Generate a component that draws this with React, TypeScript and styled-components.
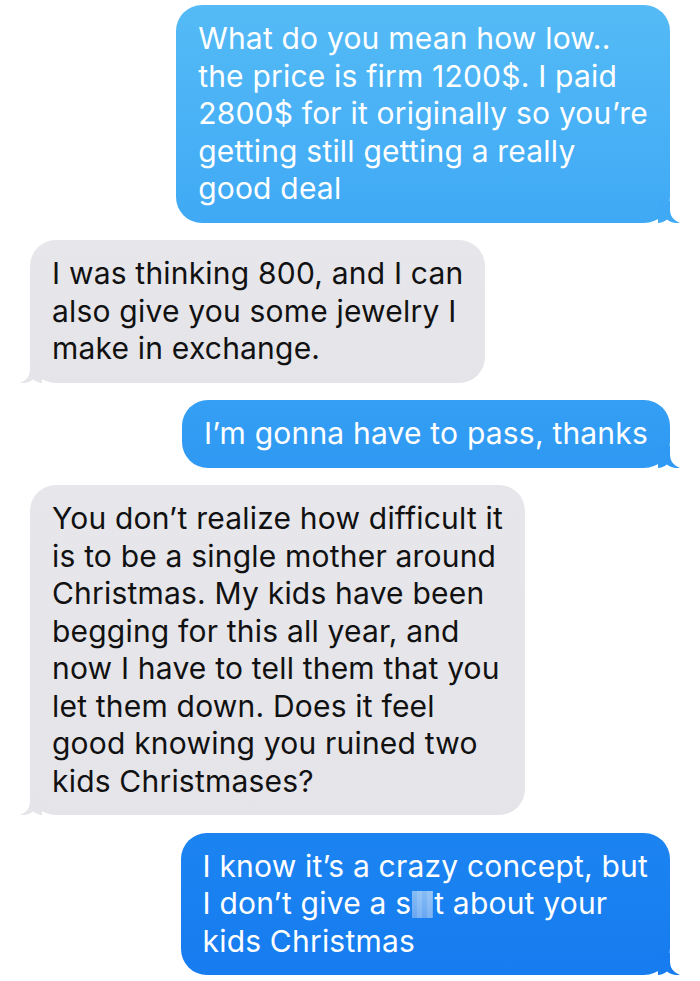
import React, { FC } from 'react';
import styled, { createGlobalStyle } from 'styled-components';

const GlobalStyle = createGlobalStyle`
    html, body {
        margin: 0;
        padding: 0;
        background: #ffffff;
    }
`;

const Thread = styled.div`
    display: flex;
    flex-direction: column;
    gap: 17.5px;
    padding: 5px 30px 6px 30px;
    font-family: Inter, 'Liberation Sans', sans-serif;
`;

const Row = styled.div<{ sent: boolean }>`
    display: flex;
    justify-content: ${({ sent }) => (sent ? 'flex-end' : 'flex-start')};
`;

const Bubble = styled.div<{ top: string; bottom: string; ink: string }>`
    position: relative;
    width: fit-content;
    padding: 15px 22px 15px 22px;
    border-radius: 26px;
    background: linear-gradient(${({ top }) => top}, ${({ bottom }) => bottom});
    color: ${({ ink }) => ink};
    font-size: 30px;
    line-height: 37.5px;
    letter-spacing: 0.2px;
    white-space: pre-line;
`;

const Tail = styled.svg<{ sent: boolean }>`
    position: absolute;
    bottom: 0;
    width: 22px;
    height: 22px;
    ${({ sent }) => (sent ? 'right: -10px;' : 'left: -10px; transform: scaleX(-1);')}
`;

const Censor = styled.span`
    display: inline-block;
    width: 21px;
    height: 27px;
    vertical-align: -4px;
    margin: 0 1px;
    background:
        linear-gradient(90deg, rgba(255, 255, 255, 0.08) 50%, rgba(255, 255, 255, 0.2) 50%),
        linear-gradient(#7db7f4, #5b9ff1);
    background-size: 10px 100%, 100% 100%;
`;

type Message = {
    sent: boolean;
    top: string;
    bottom: string;
    body: React.ReactNode;
};

const messages: Message[] = [
    {
        sent: true,
        top: '#55bbf6',
        bottom: '#3fa9f5',
        body: 'What do you mean how low..\nthe price is firm 1200$. I paid\n2800$ for it originally so you\u2019re\ngetting still getting a really\ngood deal',
    },
    {
        sent: false,
        top: '#e6e6eb',
        bottom: '#e4e4e9',
        body: 'I was thinking 800, and I can\nalso give you some jewelry I\nmake in exchange.',
    },
    {
        sent: true,
        top: '#349ff4',
        bottom: '#2f99f3',
        body: 'I\u2019m gonna have to pass, thanks',
    },
    {
        sent: false,
        top: '#e6e6eb',
        bottom: '#e4e4e9',
        body: 'You don\u2019t realize how difficult it\nis to be a single mother around\nChristmas. My kids have been\nbegging for this all year, and\nnow I have to tell them that you\nlet them down. Does it feel\ngood knowing you ruined two\nkids Christmases?',
    },
    {
        sent: true,
        top: '#1c84f1',
        bottom: '#167cf0',
        body: (
            <>
                {'I know it\u2019s a crazy concept, but\nI don\u2019t give a s'}
                <Censor />
                {'t about your\nkids Christmas'}
            </>
        ),
    },
];

const App: FC = () => {
    return (
        <>
            <GlobalStyle />
            <Thread>
                {messages.map((m, index) => (
                    <Row sent={m.sent} key={index}>
                        <Bubble top={m.top} bottom={m.bottom} ink={m.sent ? '#ffffff' : '#111111'}>
                            {m.body}
                            <Tail sent={m.sent} viewBox="0 0 22 22">
                                <path
                                    d="M0 0 H12 V8 C12 15 15 19 22 22 C16 22.5 12 21 9 18.5 C6 20.5 3 22 0 22 Z"
                                    fill={m.bottom}
                                />
                            </Tail>
                        </Bubble>
                    </Row>
                ))}
            </Thread>
        </>
    );
};

export default App;
